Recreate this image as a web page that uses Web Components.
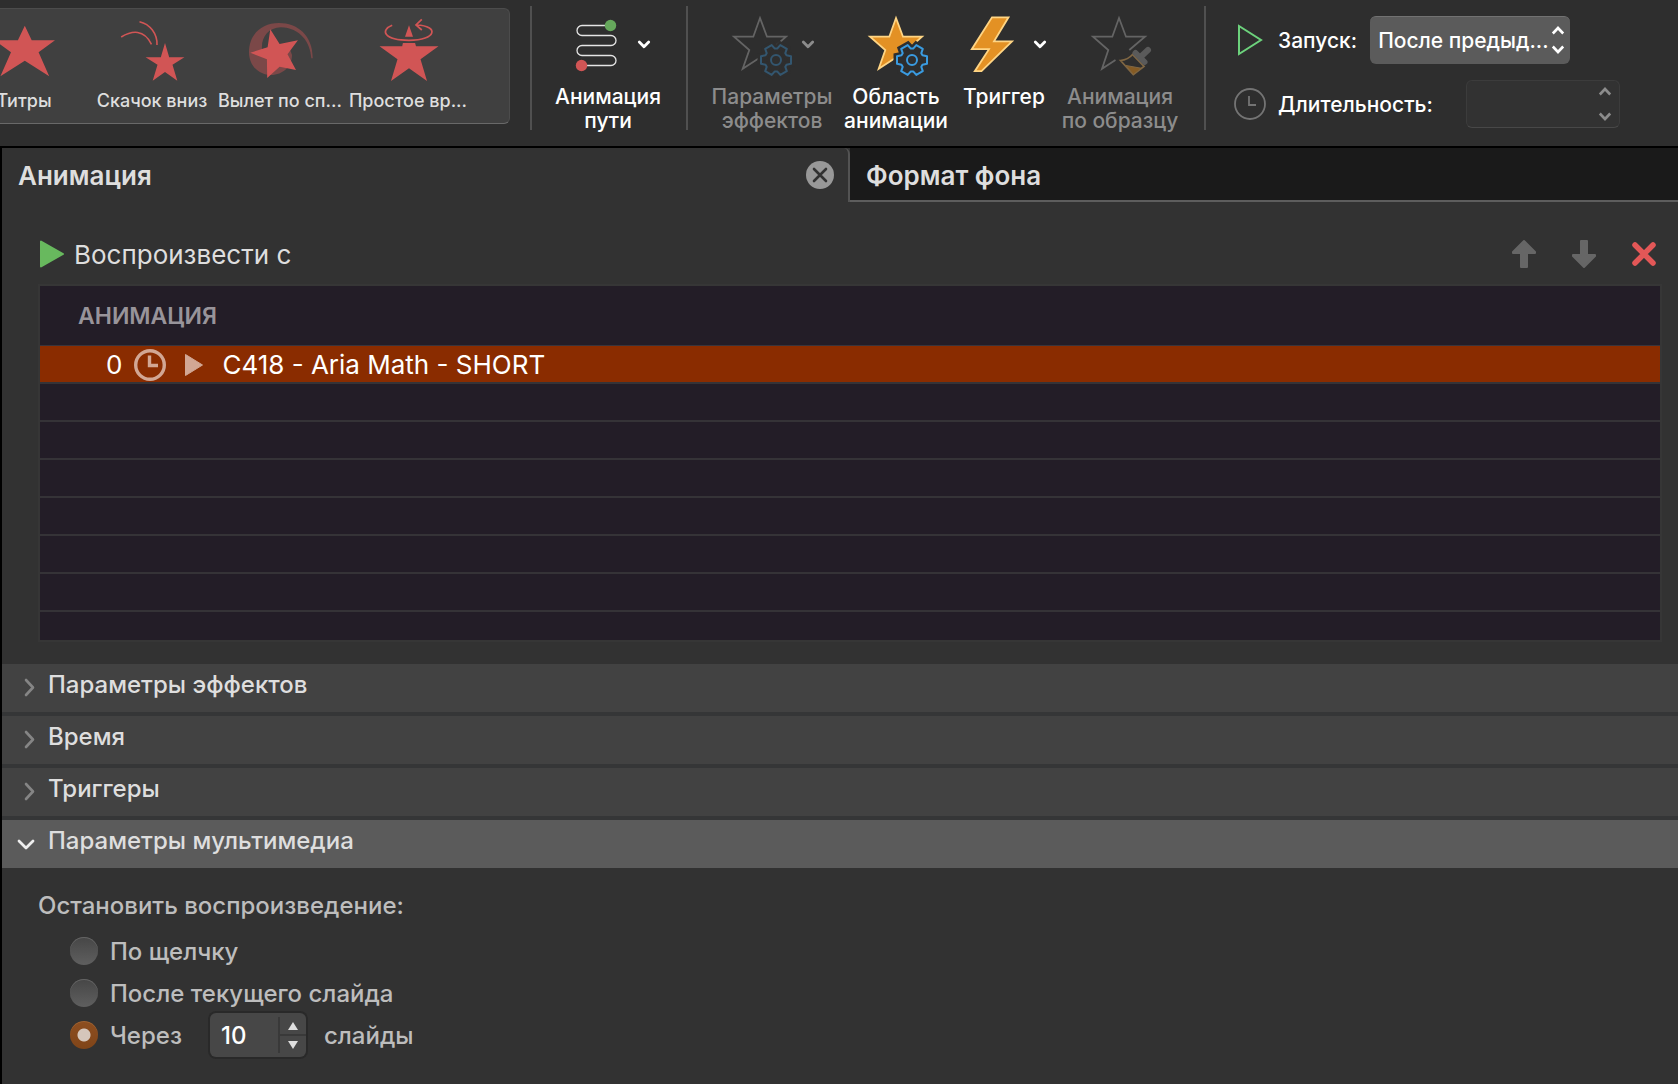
<!DOCTYPE html>
<html lang="ru">
<head>
<meta charset="utf-8">
<title>Анимация</title>
<style>
html, body { margin: 0; height: 100%; }
body { background: #323232; color: #dedede; font-family: Inter, "Noto Sans", sans-serif; font-size: 24px; overflow: hidden; }
</style>
</head>
<body>
<animation-app></animation-app>
<script>
const define = (name, html, setup) => {
  const template = document.createElement('template');
  template.innerHTML = html;
  customElements.define(name, class extends HTMLElement {
    constructor() {
      super();
      this.attachShadow({ mode: 'open' }).append(template.content.cloneNode(true));
    }
    connectedCallback() { if (setup) setup(this, this.shadowRoot); }
  });
};

// Six-toothed gear outline centred on (cx, cy)
const gear = (cx, cy) => {
  const points = [];
  for (let a = 0; a < 360; a += 60) {
    for (const [r, d] of [[11.5, -24], [15.5, -14], [15.5, 14], [11.5, 24]]) {
      const t = (a + d) * Math.PI / 180;
      points.push((cx + r * Math.cos(t)).toFixed(1) + ' ' + (cy + r * Math.sin(t)).toFixed(1));
    }
  }
  return 'M' + points.join('L') + 'Z';
};
const STAR = 'M30 4L37 22.7H56L41 36L47.7 55L30 43.5L12.7 54.8L19.3 36L4 22.7H23.3Z';
const gearOn = color => `<path d="${gear(46, 46)}" fill="#2e2e2e" stroke="#2e2e2e" stroke-width="7"/>
  <path d="${gear(46, 46)}" fill="none" stroke="${color}" stroke-width="2" stroke-linejoin="round"/>
  <circle cx="46" cy="46" r="5" fill="none" stroke="${color}" stroke-width="2"/>`;

const ICONS = {
  'fx-credits': [64, 66, '<path fill="#d15555" d="M32.8 9.7L39.7 24.3H63L46.6 36.3L57.2 60.3L32.8 44.7L8.4 60.3L19 36.3L2.6 24.3H25.9Z"/>'],
  'fx-bounce': [64, 66, '<path fill="#d15555" d="M45 27L49.2 41.3H64.4L52.5 48.7L57.3 64.7L45 56L32.7 64.7L37.5 48.7L25.6 41.3H40.8Z"/><path fill="none" stroke="#d15555" stroke-width="1.6" d="M19.5 5.7C30 8 37.5 18 37 29M1.2 21C12 14.5 24 13 31.5 28.3"/>'],
  'fx-spiral': [64, 66, '<path fill="#7b4848" d="M64.7 42.3C65 20 50 7 31 7C13 7 1 19 1 36C1 50 11 59 23 59C35 59 44 50 44 39L40 28L14 33C13 22 20 11.5 33 11.3C52 12 62.5 26 63.3 42.3Z"/><path fill="#d15555" d="M22.3 13.3L31.6 28L49.9 24.3L39.5 38.3L48 54L31.6 50.7L19.2 62L18.9 43.3L2.3 36.7L19.6 31.3Z"/>'],
  'fx-spin': [64, 66, '<path fill="#d15555" d="M3.5 30.3H26.2L26.9 27H39.1L40 30.3H62.5L44.5 43.3L51 65L33 52.3L15 65L21.5 43.3ZM33 9.3L37 20.7H29Z"/><path fill="none" stroke="#d15555" stroke-width="1.7" d="M16.2 9.3C4 14 7.5 24.3 33 24.3C61 24.3 63 10 41 9M45.8 3.3L40 9L45.8 14"/>'],
  path: [60, 60, '<path fill="none" stroke="#e4e4e4" stroke-width="1.3" d="M44 11.5H16a5 5 0 0 0 0 10H45a5 5 0 0 1 0 10H16a5 5 0 0 0 0 10H45a5 5 0 0 1 0 10H16"/><circle cx="44.5" cy="11.5" r="5.7" fill="#66a85c"/><circle cx="15.5" cy="51.5" r="5.7" fill="#d15555"/>'],
  'star-options': [60, 60, `<path fill="none" stroke="#646464" stroke-width="1.8" d="${STAR}"/>${gearOn('#33566f')}`],
  'star-pane': [60, 60, `<path fill="#e39124" stroke="#ffd584" stroke-width="1.8" d="${STAR}"/>${gearOn('#3a9be0')}`],
  bolt: [60, 60, '<path fill="#e39124" stroke="#ffd584" stroke-width="1.8" d="M30 3.3H46.5L32 27.3H50L19.5 57.2H12.8L27 35.2H9.8Z"/>'],
  'star-painter': [60, 60, '<path fill="none" stroke="#646464" stroke-width="1.8" d="M39.3 36L55 22.7H36L29 4L22.3 22.7H3L18.3 36L12 54.8L25.5 46"/><path fill="none" stroke="#806743" stroke-width="1.7" d="M30.5 46.5C36 46 40 43.5 42.5 40.5L54 52.5L43.3 60.5Z"/><path fill="#855b24" stroke="#806743" d="M36 51.5L51.5 54.3L43.3 60.5Z"/><path stroke="#5a5a5a" stroke-width="6" stroke-linecap="round" fill="none" d="M58 36L50 43.5M45.5 39L54.5 48"/>'],
  chevron: [12, 12, '<path fill="none" stroke="currentColor" stroke-width="2.8" stroke-linecap="round" stroke-linejoin="round" d="M1.3 4L6 8.8L10.7 4"/>'],
  'chevron-up': [12, 12, '<path fill="none" stroke="currentColor" stroke-width="2.6" d="M.8 8.5L6 3L11.2 8.5"/>'],
  'chevron-down': [12, 12, '<path fill="none" stroke="currentColor" stroke-width="2.6" d="M.8 3.5L6 9L11.2 3.5"/>'],
  start: [32, 32, '<path fill="none" stroke="#6cd27c" stroke-width="2" d="M5 2V30L27 16Z"/>'],
  duration: [32, 32, '<circle cx="16" cy="16" r="15" fill="none" stroke="#747474" stroke-width="1.8"/><path fill="none" stroke="#747474" stroke-width="1.8" d="M15 8V17H22"/>'],
  close: [28, 28, '<circle cx="14" cy="14" r="14" fill="#989898"/><path stroke="#323232" stroke-width="2.6" stroke-linecap="round" d="M8 8L20 20M20 8L8 20"/>'],
  play: [24, 28, '<path fill="#68b95e" stroke="#68b95e" stroke-width="2" stroke-linejoin="round" d="M1 1.5V26.5L23 14Z"/>'],
  up: [24, 28, '<path fill="#666" stroke="#666" stroke-width="2" stroke-linejoin="round" d="M12 1L1 12V13H9V27H15V13H23V12Z"/>'],
  down: [24, 28, '<path fill="#666" stroke="#666" stroke-width="2" stroke-linejoin="round" d="M12 27L1 16V15H9V1H15V15H23V16Z"/>'],
  remove: [24, 28, '<path stroke="#e35757" stroke-width="5.5" stroke-linecap="round" d="M3 5L21 23M21 5L3 23"/>'],
  clock: [32, 32, '<circle cx="16" cy="16" r="14.3" fill="none" stroke="#d2a794" stroke-width="3.4"/><path fill="none" stroke="#d2a794" stroke-width="3.4" d="M15.5 6.5V16.5H24"/>'],
  media: [18, 22, '<path fill="#d2a794" stroke="#d2a794" stroke-linejoin="round" d="M.5 .5V21.5L17.5 11Z"/>'],
  closed: [18, 18, '<path fill="none" stroke="currentColor" stroke-width="2.6" stroke-linecap="round" stroke-linejoin="round" d="M9 1L16 8.500L9 16"/>'],
  opened: [18, 18, '<path fill="none" stroke="currentColor" stroke-width="2.8" stroke-linecap="round" stroke-linejoin="round" d="M2 6L9 13L16 6"/>'],
  'step-up': [10, 8, '<path fill="#dedede" d="M5 0L10 8H0Z"/>'],
  'step-down': [10, 8, '<path fill="#dedede" d="M5 8L10 0H0Z"/>']
};

define('ui-icon', '<style>:host{display:block;flex:none}svg{display:block;overflow:visible}</style>', (host, root) => {
  const [w, h, body] = ICONS[host.getAttribute('name')];
  if (!root.querySelector('svg')) root.innerHTML += `<svg width="${w}" height="${h}" viewBox="0 0 ${w} ${h}" aria-hidden="true">${body}</svg>`;
});

const RESET = 'button,input,select{font:inherit;color:inherit;background:none;border:0;margin:0;padding:0;border-radius:0;appearance:none}*{box-sizing:border-box}';

define('gallery-effect', `<style>${RESET}
:host{display:block;flex:none;width:128px}
button{display:flex;flex-direction:column;align-items:center;width:100%;gap:7px;white-space:nowrap}
span{font-size:18px;line-height:24px;font-weight:500;color:#dedede}
</style><button><slot name="icon"></slot><span><slot></slot></span></button>`);

define('effect-gallery', `<style>
:host{display:flex;justify-content:flex-end;box-sizing:border-box;flex:none;width:510px;height:116px;padding:7px 37px 0 0;overflow:hidden;
background:#404040;border:1px solid #4c4c4c;border-left:0;border-bottom-color:#696969;border-radius:0 6px 6px 0;margin-top:8px}
</style><slot></slot>`);

define('ribbon-separator', '<style>:host{display:block;flex:none;width:2px;height:124px;margin-top:6px;background:#505050}</style>');

define('ribbon-button', `<style>${RESET}
:host{display:block;flex:none;color:#fff}
:host([off]){color:#8c8c8c}
button{display:flex;flex-direction:column;align-items:center;width:100%;padding-top:14px;gap:11px}
.icons{display:flex;align-items:center;gap:12px;height:60px}
.label{font-size:21px;line-height:24px;font-weight:500;white-space:nowrap}
</style><button><span class="icons"><slot name="icon"></slot></span><span class="label"><slot></slot></span></button>`,
(host, root) => { root.querySelector('button').disabled = host.hasAttribute('off'); });

define('timing-group', `<style>${RESET}
:host{display:flex;flex-direction:column;gap:16px;padding:16px 0 0 28px;color:#fff;font-size:21px;font-weight:500}
.row{display:flex;align-items:center;height:48px;white-space:nowrap}
label{margin-left:12px}
.pick{display:flex;align-items:center;width:200px;height:48px;margin-left:13px;position:relative}
select{width:100%;height:100%;padding:0 18px 0 8px;background:#5b5b5b;border-top:1px solid #727272;border-radius:6px;font-weight:500}
.arrows{display:flex;flex-direction:column;position:absolute;right:6px;pointer-events:none;gap:6px}
.spin{display:flex;align-items:center;width:154px;height:48px;margin-left:33px;background:#323232;border:1px solid #3c3c3c;border-bottom-color:#484848;border-radius:6px;padding-right:8px;color:#8c8c8c}
input{flex:1;min-width:0;height:100%;padding-left:9px}
.steps{display:flex;flex-direction:column;gap:12px}
button{display:block}
</style>
<div class="row"><ui-icon name="start"></ui-icon><label for="start">Запуск:</label>
<span class="pick"><select id="start"><option>После предыд...</option></select><span class="arrows"><ui-icon name="chevron-up"></ui-icon><ui-icon name="chevron-down"></ui-icon></span></span></div>
<div class="row"><ui-icon name="duration"></ui-icon><label for="duration">Длительность:</label>
<span class="spin"><input id="duration" type="text" disabled><span class="steps"><button disabled aria-label="Больше"><ui-icon name="chevron-up"></ui-icon></button><button disabled aria-label="Меньше"><ui-icon name="chevron-down"></ui-icon></button></span></span></div>`);

define('app-ribbon', `<style>
:host{display:flex;align-items:flex-start;height:146px;background:#2e2e2e;border-bottom:2px solid #000}
.sep1{margin-left:20px}
.path{width:104px;margin:0 26px 0 24px}
.tools{display:flex;gap:12px;padding:0 24px}
.w-m{width:104px}.w-l{width:120px}.w-s{width:88px}
</style>
<effect-gallery>
<gallery-effect><ui-icon slot="icon" name="fx-credits"></ui-icon>Титры</gallery-effect>
<gallery-effect><ui-icon slot="icon" name="fx-bounce"></ui-icon>Скачок вниз</gallery-effect>
<gallery-effect><ui-icon slot="icon" name="fx-spiral"></ui-icon>Вылет по сп...</gallery-effect>
<gallery-effect><ui-icon slot="icon" name="fx-spin"></ui-icon>Простое вр...</gallery-effect>
</effect-gallery>
<ribbon-separator class="sep1"></ribbon-separator>
<ribbon-button class="path"><ui-icon slot="icon" name="path"></ui-icon><ui-icon slot="icon" name="chevron"></ui-icon>Анимация<br>пути</ribbon-button>
<ribbon-separator></ribbon-separator>
<div class="tools">
<ribbon-button off class="w-l"><ui-icon slot="icon" name="star-options"></ui-icon><ui-icon slot="icon" name="chevron"></ui-icon>Параметры<br>эффектов</ribbon-button>
<ribbon-button class="w-m"><ui-icon slot="icon" name="star-pane"></ui-icon>Область<br>анимации</ribbon-button>
<ribbon-button class="w-s"><ui-icon slot="icon" name="bolt"></ui-icon><ui-icon slot="icon" name="chevron"></ui-icon>Триггер</ribbon-button>
<ribbon-button off class="w-l"><ui-icon slot="icon" name="star-painter"></ui-icon>Анимация<br>по образцу</ribbon-button>
</div>
<ribbon-separator></ribbon-separator>
<timing-group></timing-group>`);

define('pane-tabs', `<style>${RESET}
:host{display:flex;height:54px;font-size:26px;font-weight:600;line-height:30px}
.tab{display:flex;align-items:flex-start;flex:1 1 0;padding:13px 16px 0}
.active{justify-content:space-between;flex:0 0 auto;width:calc(50% + 10px);padding-right:14px;border-right:2px solid #535353;border-top-right-radius:6px}
.other{background:#1a1a1a;border-bottom:2px solid #5d5d5d}
</style>
<div class="tab active"><button>Анимация</button><button aria-label="Закрыть"><ui-icon name="close"></ui-icon></button></div>
<div class="tab other"><button>Формат фона</button></div>`);

define('play-bar', `<style>${RESET}
:host{display:flex;justify-content:space-between;align-items:center;height:28px;padding:0 22px 0 38px}
.play{display:flex;align-items:center;gap:10px;font-size:26px;line-height:30px}
.play span{padding-top:2px}
.actions{display:flex;gap:36px}
</style>
<button class="play"><ui-icon name="play"></ui-icon><span>Воспроизвести с</span></button>
<div class="actions"><button disabled aria-label="Вверх"><ui-icon name="up"></ui-icon></button><button disabled aria-label="Вниз"><ui-icon name="down"></ui-icon></button><button aria-label="Удалить"><ui-icon name="remove"></ui-icon></button></div>`);

define('animation-list', `<style>
:host{display:block;margin:0 16px 0 36px;border:2px solid #363636;background:#231d27;height:354px;overflow:hidden}
table{width:100%;border-collapse:separate;border-spacing:0;table-layout:fixed}
th,td{padding:0;box-sizing:border-box;text-align:left}
th{height:60px;padding-left:38px;font-size:23px;line-height:28px;font-weight:600;color:#98949a;border-bottom:1px solid #38343c}
td{height:38px;border-bottom:2px solid #353337}
.cell{display:flex;align-items:center;box-sizing:border-box;height:36px;padding:2px 0 0 66px;font-size:26px;line-height:30px;color:#fff}
.selected td{background:#8a2c00}
.clock{margin:0 19px 0 12px}
.media{margin-right:19px}
</style>
<table><thead><tr><th scope="col">АНИМАЦИЯ</th></tr></thead><tbody>
<tr class="selected"><td><div class="cell"><span>0</span><ui-icon class="clock" name="clock"></ui-icon><ui-icon class="media" name="media"></ui-icon><span>C418 - Aria Math - SHORT</span></div></td></tr>
<tr><td></td></tr><tr><td></td></tr><tr><td></td></tr><tr><td></td></tr><tr><td></td></tr><tr><td></td></tr><tr><td></td></tr>
</tbody></table>`);

define('option-section', `<style>${RESET}
:host{display:block}
button{display:flex;align-items:center;gap:13px;width:100%;height:48px;padding:0 15px;background:#424242;text-align:left;font-size:24px;line-height:28px;font-weight:500}
.title{padding-bottom:6px}
ui-icon{color:#858585}
:host([open]) button{background:#5b5b5b}
:host([open]) ui-icon{color:#eee}
</style><button></button><slot></slot>`, (host, root) => {
  const open = host.hasAttribute('open');
  const button = root.querySelector('button');
  button.setAttribute('aria-expanded', open);
  button.innerHTML = `<ui-icon name="${open ? 'opened' : 'closed'}"></ui-icon><span class="title">${host.getAttribute('heading')}</span>`;
});

define('media-options', `<style>${RESET}
:host{display:block;padding:22px 36px;color:#bdbdbd;font-weight:500;font-size:24px;line-height:32px}
fieldset{border:0;margin:0;padding:0;min-width:0}
legend{padding:0}
.list{display:flex;flex-direction:column;padding:8px 0 0 32px}
.row{display:flex;align-items:center;height:42px}
label{padding-top:2px}
[type=radio]{width:28px;height:28px;border-radius:50%;margin-right:12px;background:linear-gradient(#464646,#5f5f5f);box-shadow:inset 0 1px #646464}
[type=radio]:checked{background:radial-gradient(circle,#d5c6bb 6px,transparent 7px),linear-gradient(#8d4e20,#804519);box-shadow:inset 0 1px #a06432}
.spin{display:flex;width:96px;height:44px;margin:0 18px 0 28px;border-radius:6px;background:#474747;box-shadow:0 0 0 2px #292929}
[type=number]{width:68px;padding:2px 0 0 11px;color:#fff;font-weight:500;appearance:textfield}
[type=number]::-webkit-inner-spin-button{appearance:none;display:none}
.steps{display:flex;flex-direction:column;flex:1;margin:4px 0;border-left:2px solid #393939}
.steps button{display:flex;flex:1;align-items:center;justify-content:center}
.steps button+button{border-top:2px solid #393939}
</style>
<fieldset><legend>Остановить воспроизведение:</legend><div class="list">
<div class="row"><input type="radio" name="stop" id="click"><label for="click">По щелчку</label></div>
<div class="row"><input type="radio" name="stop" id="current"><label for="current">После текущего слайда</label></div>
<div class="row"><input type="radio" name="stop" id="after" checked><label for="after">Через</label>
<span class="spin"><input type="number" id="count" value="10"><span class="steps"><button aria-label="Больше"><ui-icon name="step-up"></ui-icon></button><button aria-label="Меньше"><ui-icon name="step-down"></ui-icon></button></span></span><label for="count">слайды</label></div>
</div></fieldset>`);

define('animation-pane', `<style>
:host{display:flex;flex-direction:column;flex:1;border-left:2px solid #000;background:#323232}
play-bar{margin:38px 0 16px}
.sections{display:flex;flex-direction:column;gap:4px;margin-top:22px;background:#353637}
.tail{background:#323232}
</style>
<pane-tabs></pane-tabs><play-bar></play-bar><animation-list></animation-list>
<div class="sections">
<option-section heading="Параметры эффектов"></option-section>
<option-section heading="Время"></option-section>
<option-section heading="Триггеры"></option-section>
<option-section heading="Параметры мультимедиа" open><media-options class="tail"></media-options></option-section>
</div>`);

define('animation-app', `<style>:host{display:flex;flex-direction:column;min-height:100%}</style><app-ribbon></app-ribbon><animation-pane></animation-pane>`);
</script>
</body>
</html>
